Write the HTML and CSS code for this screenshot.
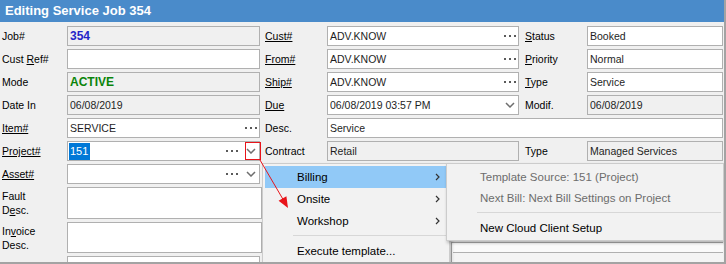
FILE: index.html
```html
<!DOCTYPE html>
<html>
<head>
<meta charset="utf-8">
<link rel="stylesheet" href="styles.css">
</head>
<body>
<div class="window">
  <div class="titlebar">Editing Service Job 354</div>
  <div class="form">
    <div class="lbl">Job#</div>
    <div class="fld ro"><span class="job">354</span></div>
    <div class="lbl m"><u>Cust#</u></div>
    <div class="fld"><span>ADV.KNOW</span><svg class="ico dots" width="12" height="2"><rect x="0" y="0" width="2" height="2"/><rect x="5" y="0" width="2" height="2"/><rect x="10" y="0" width="2" height="2"/></svg></div>
    <div class="lbl r"><u>S</u>tatus</div>
    <div class="fld"><span>Booked</span></div>

    <div class="lbl">Cust <u>R</u>ef#</div>
    <div class="fld"></div>
    <div class="lbl m"><u>From#</u></div>
    <div class="fld"><span>ADV.KNOW</span><svg class="ico dots" width="12" height="2"><rect x="0" y="0" width="2" height="2"/><rect x="5" y="0" width="2" height="2"/><rect x="10" y="0" width="2" height="2"/></svg></div>
    <div class="lbl r"><u>P</u>riority</div>
    <div class="fld"><span>Normal</span></div>

    <div class="lbl">Mode</div>
    <div class="fld ro"><span class="active">ACTIVE</span></div>
    <div class="lbl m"><u>Ship#</u></div>
    <div class="fld"><span>ADV.KNOW</span><svg class="ico dots" width="12" height="2"><rect x="0" y="0" width="2" height="2"/><rect x="5" y="0" width="2" height="2"/><rect x="10" y="0" width="2" height="2"/></svg></div>
    <div class="lbl r"><u>T</u>ype</div>
    <div class="fld"><span>Service</span></div>

    <div class="lbl">Date In</div>
    <div class="fld ro"><span>06/08/2019</span></div>
    <div class="lbl m"><u>Due</u></div>
    <div class="fld"><span>06/08/2019 03:57 PM</span><svg class="ico chev" width="10" height="6"><path d="M1 1 L5 5 L9 1"/></svg></div>
    <div class="lbl r">Modif.</div>
    <div class="fld ro"><span>06/08/2019</span></div>

    <div class="lbl"><u>Item#</u></div>
    <div class="fld"><span>SERVICE</span><svg class="ico dots" width="12" height="2"><rect x="0" y="0" width="2" height="2"/><rect x="5" y="0" width="2" height="2"/><rect x="10" y="0" width="2" height="2"/></svg></div>
    <div class="lbl m">Desc.</div>
    <div class="fld wide"><span>Service</span></div>

    <div class="lbl"><u>Project#</u></div>
    <div class="fld combo"><span class="sel">151</span><svg class="ico dots" width="12" height="2"><rect x="0" y="0" width="2" height="2"/><rect x="5" y="0" width="2" height="2"/><rect x="10" y="0" width="2" height="2"/></svg><svg class="chev" width="10" height="6"><path d="M1 1 L5 5 L9 1"/></svg></div>
    <div class="lbl m">Contract</div>
    <div class="fld ro"><span>Retail</span></div>
    <div class="lbl r">Type</div>
    <div class="fld ro"><span>Managed Services</span></div>

    <div class="lbl"><u>Asset#</u></div>
    <div class="fld combo"><svg class="ico dots" width="12" height="2"><rect x="0" y="0" width="2" height="2"/><rect x="5" y="0" width="2" height="2"/><rect x="10" y="0" width="2" height="2"/></svg><svg class="chev" width="10" height="6"><path d="M1 1 L5 5 L9 1"/></svg></div>
    <div class="rest"></div>

    <div class="lbl multi">Fault<br>D<u>e</u>sc.</div>
    <div class="fld memo"></div>
    <div class="rest"></div>

    <div class="lbl multi">In<u>v</u>oice<br>Desc.</div>
    <div class="fld memo"></div>
    <div class="under"><div class="under-box"><div class="under-inner"></div></div></div>

    <div class="lbl">Cause</div>
    <div class="fld"><span>HAPPENED</span></div>
  </div>

  <div class="menu">
    <div class="mi hl"><span>Billing</span><svg class="arr" width="5" height="8"><path d="M1 1 L4 4 L1 7"/></svg></div>
    <div class="mi"><span>Onsite</span><svg class="arr" width="5" height="8"><path d="M1 1 L4 4 L1 7"/></svg></div>
    <div class="mi"><span>Workshop</span><svg class="arr" width="5" height="8"><path d="M1 1 L4 4 L1 7"/></svg></div>
    <div class="sep"></div>
    <div class="mi"><span>Execute template...</span></div>
  </div>

  <div class="submenu">
    <div class="si dis">Template Source: 151 (Project)</div>
    <div class="si dis">Next Bill: Next Bill Settings on Project</div>
    <div class="sep sub"></div>
    <div class="si">New Cloud Client Setup</div>
  </div>

  <svg class="annot" width="726" height="264">
    <rect x="245.5" y="142.5" width="15" height="17" fill="none" stroke="#e8141a" stroke-width="1"/>
    <line x1="260" y1="160" x2="284" y2="201" stroke="#e8141a" stroke-width="1"/>
    <polygon points="288,208 278.6,200.8 286.4,196.2" fill="#e8141a"/>
  </svg>
</div>
</body>
</html>
```

FILE: styles.css
```css
* { box-sizing: border-box; }
html, body { margin: 0; padding: 0; }
body {
  width: 726px;
  height: 264px;
  overflow: hidden;
  background: #f0f0f0;
  font-family: "Liberation Sans", Arial, sans-serif;
  font-size: 10.5px;
  color: #000;
}
.window {
  position: relative;
  width: 726px;
  height: 264px;
  border-right: 2px solid #a3a3a3;
  border-bottom: 2px solid #a3a3a3;
  overflow: hidden;
  background: #f0f0f0;
}
.titlebar {
  height: 22px;
  background: #4a8bca;
  color: #fff;
  font-weight: bold;
  font-size: 13px;
  line-height: 22px;
  padding-left: 5px;
}
.form {
  display: grid;
  grid-template-columns: 67px 193px 67px 192px 68px 136px;
  grid-template-rows: repeat(7, 20px) 32px 31px 20px;
  row-gap: 3px;
  padding-top: 4px;
}
.lbl {
  line-height: 20px;
  padding-left: 2px;
  white-space: nowrap;
}
.lbl.m { padding-left: 5px; }
.lbl.r { padding-left: 6px; }
.lbl.multi {
  line-height: 14px;
  padding-top: 2px;
}
.fld {
  display: flex;
  align-items: center;
  background: #fff;
  border: 1px solid #b0b0b0;
  padding: 0 2px 0 2px;
  min-width: 0;
  overflow: hidden;
  white-space: nowrap;
  color: #1e1e1e;
}
.fld.ro { background: #f0f0f0; }
.fld.wide { grid-column: 4 / 7; }
.fld.memo { width: 195px; }
.fld.combo { padding-right: 3px; }
.ico { margin-left: auto; }
.dots rect { fill: #5a5a5a; }
.chev { margin-left: 8px; }
.ico.chev { margin-left: auto; margin-right: 1px; }
.chev path { fill: none; stroke: #6e6e6e; stroke-width: 1.5; }
.job { color: #2424c8; font-weight: bold; font-size: 12px; }
.active { color: #0a840a; font-weight: bold; font-size: 12px; }
.sel {
  background: #0078d7;
  color: #fff;
  padding: 1px 2px 1px 1px;
  margin-left: -1px;
  line-height: 15px;
  font-size: 11px;
}
.rest { grid-column: 3 / 7; }
.under {
  grid-column: 3 / 7;
  grid-row: 9 / 11;
  padding: 20px 0 0 191px;
}
.under-box {
  height: 40px;
  border-top: 1px solid #a8a8a8;
  border-left: 1px solid #a8a8a8;
  background: #fafafa;
  padding: 9px 0 0 1px;
}
.under-inner {
  height: 30px;
  border-top: 1px solid #b0b0b0;
  background: #f4f4f4;
}

.menu {
  position: absolute;
  left: 262px;
  top: 163px;
  width: 188px;
  height: 110px;
  background: #f2f2f2;
  border: 1px solid #cccccc;
  padding: 2px;
  font-size: 11.5px;
  box-shadow: 2px 2px 3px rgba(0,0,0,0.2);
}
.mi {
  height: 22px;
  display: flex;
  align-items: center;
  justify-content: space-between;
  padding: 0 7px 0 32px;
}
.mi.hl { background: #91c9f7; }
.arr path { fill: none; stroke: #333; stroke-width: 1.2; }
.sep {
  margin: 3px 0 4px 28px;
  border-top: 1px solid #d7d7d7;
}
.submenu {
  position: absolute;
  left: 446px;
  top: 163px;
  width: 278px;
  height: 78px;
  background: #f2f2f2;
  border: 1px solid #cccccc;
  padding: 2px;
  font-size: 11.5px;
  box-shadow: 1px 2px 3px rgba(0,0,0,0.25);
}
.si {
  height: 21px;
  display: flex;
  align-items: center;
  padding-left: 31px;
}
.si.dis { color: #6d6d6d; }
.sep.sub { margin: 4px 0 4px 28px; }
.annot {
  position: absolute;
  left: 0;
  top: 0;
  pointer-events: none;
}
```
